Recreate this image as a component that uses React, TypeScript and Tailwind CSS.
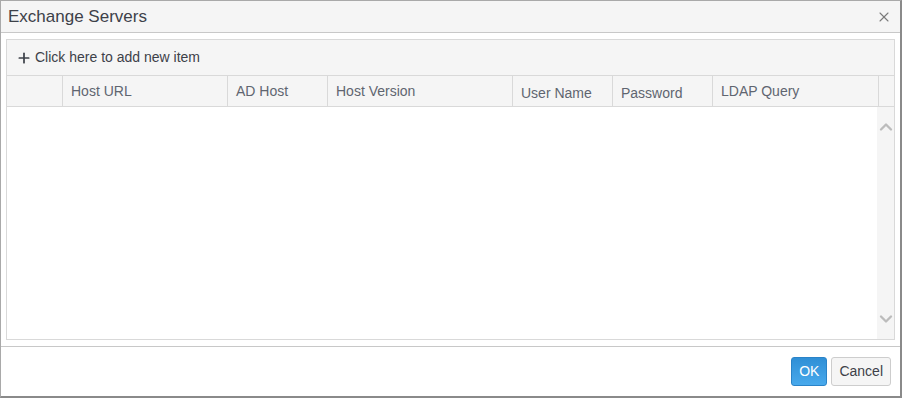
import { Plus, X, ChevronUp, ChevronDown } from "lucide-react"

const columns = [
  { label: "", width: "w-[56px]" },
  { label: "Host URL", width: "w-[165px]" },
  { label: "AD Host", width: "w-[100px]" },
  { label: "Host Version", width: "w-[185px]" },
  { label: "User Name", width: "w-[100px]", low: true },
  { label: "Password", width: "w-[100px]", low: true },
  { label: "LDAP Query", width: "w-[166px]" },
]

export default function App() {
  return (
    <div className="w-[902px] h-[398px] bg-white font-['Liberation_Sans',Arial,sans-serif]">
      <div className="flex flex-col w-full h-full border border-[#a9a9a9] border-r-2 border-b-2 border-r-[#8a8a8a] border-b-[#8a8a8a]">
        {/* Titre */}
        <div className="flex items-center justify-between h-[32px] bg-[#f5f5f5] border-b border-[#c8c8c8] pl-[7px] pr-[8px]">
          <span className="text-[17px] text-[#3d4149]">Exchange Servers</span>
          <X size={16} strokeWidth={1.6} className="text-[#7a7a7a]" />
        </div>

        {/* Grille */}
        <div className="flex-1 px-[5px] pt-[6px] pb-[6px]">
          <div className="flex flex-col h-full border border-[#d9d9d9]">
            <div className="flex items-center h-[36px] bg-[#f5f5f5] border-b border-[#d9d9d9] pl-[9px] gap-[3px] text-[14px] text-[#3d4149]">
              <Plus size={16} strokeWidth={2.6} />
              <span>Click here to add new item</span>
            </div>
            <div className="flex h-[31px] bg-[#f5f5f5] border-b border-[#d9d9d9] text-[14px] text-[#5f6570]">
              {columns.map((c, i) => (
                <div
                  key={i}
                  className={`${c.width} shrink-0 border-r border-[#d9d9d9] pl-[8px] ${c.low ? "pt-[7px]" : "pt-[5px]"}`}
                >
                  {c.label}
                </div>
              ))}
              <div className="flex-1" />
            </div>
            <div className="flex flex-1">
              <div className="flex-1" />
              <div className="w-[17px] bg-[#f5f5f5] flex flex-col items-center justify-between pt-[10px] pb-[10px] text-[#bcbcbc]">
                <ChevronUp size={20} strokeWidth={2.8} />
                <ChevronDown size={20} strokeWidth={2.8} />
              </div>
            </div>
          </div>
        </div>

        {/* Pied */}
        <div className="flex items-center justify-end gap-[4px] h-[50px] border-t border-[#c8c8c8] pr-[9px] pb-[1px]">
          <button className="h-[29px] px-[7px] rounded-[3px] bg-gradient-to-b from-[#2f8fd6] to-[#48a9ec] border border-[#2a83c8] text-white text-[14px]">
            OK
          </button>
          <button className="h-[29px] px-[7px] rounded-[3px] bg-[#f5f5f5] border border-[#cdcdcd] text-[#3d4149] text-[14px]">
            Cancel
          </button>
        </div>
      </div>
    </div>
  )
}
